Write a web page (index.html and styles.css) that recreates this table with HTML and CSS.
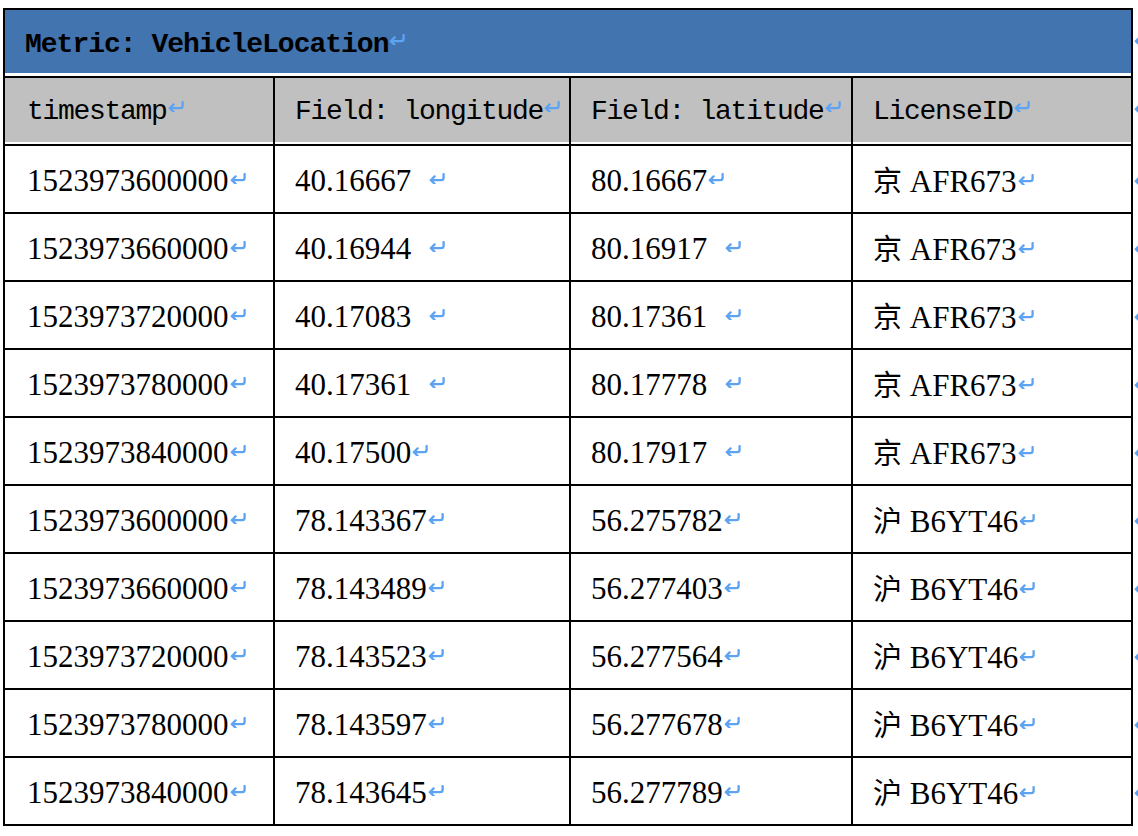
FILE: index.html
```html
<!DOCTYPE html>
<html lang="zh">
<head>
<meta charset="utf-8">
<title>Metric: VehicleLocation</title>
<link rel="stylesheet" href="styles.css">
</head>
<body>
<svg class="defs" width="0" height="0" aria-hidden="true">
  <symbol id="ret" viewBox="0 0 16 11">
    <path d="M14.6 1 V4.8 Q14.6 7.2 12.2 7.2 H1.8 M5.6 3.4 L1.8 7.2 L5.6 10.8" fill="none" stroke="#5ea3f2" stroke-width="2.3" stroke-linecap="round" stroke-linejoin="round"/>
  </symbol>
</svg>
<table class="metric">
  <colgroup>
    <col class="w1">
    <col class="w2">
    <col class="w3">
    <col class="w4">
    <col class="w5">
  </colgroup>
  <tbody>
    <tr class="title">
      <td colspan="4">Metric: VehicleLocation<svg class="ret"><use href="#ret"/></svg></td>
      <td class="end"><svg class="ret"><use href="#ret"/></svg></td>
    </tr>
    <tr class="head">
      <td>timestamp<svg class="ret"><use href="#ret"/></svg></td>
      <td>Field: longitude<svg class="ret"><use href="#ret"/></svg></td>
      <td>Field: latitude<svg class="ret"><use href="#ret"/></svg></td>
      <td>LicenseID<svg class="ret"><use href="#ret"/></svg></td>
      <td class="end"><svg class="ret"><use href="#ret"/></svg></td>
    </tr>
    <tr>
      <td>1523973600000<svg class="ret"><use href="#ret"/></svg></td>
      <td>40.16667 <svg class="ret sp"><use href="#ret"/></svg></td>
      <td>80.16667<svg class="ret"><use href="#ret"/></svg></td>
      <td><span class="cjk">京</span> AFR673<svg class="ret"><use href="#ret"/></svg></td>
      <td class="end"><svg class="ret"><use href="#ret"/></svg></td>
    </tr>
    <tr>
      <td>1523973660000<svg class="ret"><use href="#ret"/></svg></td>
      <td>40.16944 <svg class="ret sp"><use href="#ret"/></svg></td>
      <td>80.16917 <svg class="ret sp"><use href="#ret"/></svg></td>
      <td><span class="cjk">京</span> AFR673<svg class="ret"><use href="#ret"/></svg></td>
      <td class="end"><svg class="ret"><use href="#ret"/></svg></td>
    </tr>
    <tr>
      <td>1523973720000<svg class="ret"><use href="#ret"/></svg></td>
      <td>40.17083 <svg class="ret sp"><use href="#ret"/></svg></td>
      <td>80.17361 <svg class="ret sp"><use href="#ret"/></svg></td>
      <td><span class="cjk">京</span> AFR673<svg class="ret"><use href="#ret"/></svg></td>
      <td class="end"><svg class="ret"><use href="#ret"/></svg></td>
    </tr>
    <tr>
      <td>1523973780000<svg class="ret"><use href="#ret"/></svg></td>
      <td>40.17361 <svg class="ret sp"><use href="#ret"/></svg></td>
      <td>80.17778 <svg class="ret sp"><use href="#ret"/></svg></td>
      <td><span class="cjk">京</span> AFR673<svg class="ret"><use href="#ret"/></svg></td>
      <td class="end"><svg class="ret"><use href="#ret"/></svg></td>
    </tr>
    <tr>
      <td>1523973840000<svg class="ret"><use href="#ret"/></svg></td>
      <td>40.17500<svg class="ret"><use href="#ret"/></svg></td>
      <td>80.17917 <svg class="ret sp"><use href="#ret"/></svg></td>
      <td><span class="cjk">京</span> AFR673<svg class="ret"><use href="#ret"/></svg></td>
      <td class="end"><svg class="ret"><use href="#ret"/></svg></td>
    </tr>
    <tr>
      <td>1523973600000<svg class="ret"><use href="#ret"/></svg></td>
      <td>78.143367<svg class="ret"><use href="#ret"/></svg></td>
      <td>56.275782<svg class="ret"><use href="#ret"/></svg></td>
      <td><span class="cjk">沪</span> B6YT46<svg class="ret"><use href="#ret"/></svg></td>
      <td class="end"><svg class="ret"><use href="#ret"/></svg></td>
    </tr>
    <tr>
      <td>1523973660000<svg class="ret"><use href="#ret"/></svg></td>
      <td>78.143489<svg class="ret"><use href="#ret"/></svg></td>
      <td>56.277403<svg class="ret"><use href="#ret"/></svg></td>
      <td><span class="cjk">沪</span> B6YT46<svg class="ret"><use href="#ret"/></svg></td>
      <td class="end"><svg class="ret"><use href="#ret"/></svg></td>
    </tr>
    <tr>
      <td>1523973720000<svg class="ret"><use href="#ret"/></svg></td>
      <td>78.143523<svg class="ret"><use href="#ret"/></svg></td>
      <td>56.277564<svg class="ret"><use href="#ret"/></svg></td>
      <td><span class="cjk">沪</span> B6YT46<svg class="ret"><use href="#ret"/></svg></td>
      <td class="end"><svg class="ret"><use href="#ret"/></svg></td>
    </tr>
    <tr>
      <td>1523973780000<svg class="ret"><use href="#ret"/></svg></td>
      <td>78.143597<svg class="ret"><use href="#ret"/></svg></td>
      <td>56.277678<svg class="ret"><use href="#ret"/></svg></td>
      <td><span class="cjk">沪</span> B6YT46<svg class="ret"><use href="#ret"/></svg></td>
      <td class="end"><svg class="ret"><use href="#ret"/></svg></td>
    </tr>
    <tr>
      <td>1523973840000<svg class="ret"><use href="#ret"/></svg></td>
      <td>78.143645<svg class="ret"><use href="#ret"/></svg></td>
      <td>56.277789<svg class="ret"><use href="#ret"/></svg></td>
      <td><span class="cjk">沪</span> B6YT46<svg class="ret"><use href="#ret"/></svg></td>
      <td class="end"><svg class="ret"><use href="#ret"/></svg></td>
    </tr>
  </tbody>
</table>
</body>
</html>
```
FILE: styles.css
```css
html {
  overflow: hidden;
  background: #fff;
}
body {
  margin: 0;
  background: #fff;
  font-family: "Liberation Serif", "Noto Sans CJK SC", serif;
  color: #000;
}
.defs {
  position: absolute;
  width: 0;
  height: 0;
}
.metric {
  border-collapse: separate;
  border-spacing: 0;
  table-layout: fixed;
  width: 1160px;
  margin: 8px 0 0 3px;
}
.w1 { width: 272px; }
.w2 { width: 296px; }
.w3 { width: 282px; }
.w4 { width: 280px; }
.w5 { width: 30px; }
.metric td {
  box-sizing: border-box;
  height: 68px;
  padding: 3px 0 0 20px;
  border-right: 2px solid #000;
  border-bottom: 2px solid #000;
  font-size: 31px;
  line-height: 36px;
  white-space: nowrap;
  overflow: hidden;
  vertical-align: middle;
}
.metric td:first-child {
  border-left: 2px solid #000;
  padding-left: 22px;
}
.metric td.end {
  border: none;
  padding-left: 1px;
}
.metric td.end .ret {
  margin-left: 0;
}
.title td {
  border-top: 2px solid #000;
  height: 70px;
  background: #4274b0;
  box-shadow: inset 0 -3px 0 #fff;
  padding: 4px 0 0 20px;
  font-family: "Liberation Mono", monospace;
  font-weight: bold;
  font-size: 28px;
  letter-spacing: -1px;
}
.metric .title td:first-child {
  padding-left: 20px;
}
.title td.end,
.head td.end {
  background: none;
  box-shadow: none;
}
.head td {
  background: #c0c0c0;
  box-shadow: inset 0 -2px 0 #fff;
  font-family: "Liberation Mono", monospace;
  font-size: 28px;
  letter-spacing: -1.3px;
  padding-bottom: 2px;
}
.cjk {
  font-family: "Noto Sans CJK SC", sans-serif;
  font-size: 29px;
}
.ret {
  width: 16px;
  height: 11px;
  vertical-align: 7px;
  margin-left: 1px;
  overflow: visible;
}
.ret.sp {
  margin-left: 10px;
}
```
